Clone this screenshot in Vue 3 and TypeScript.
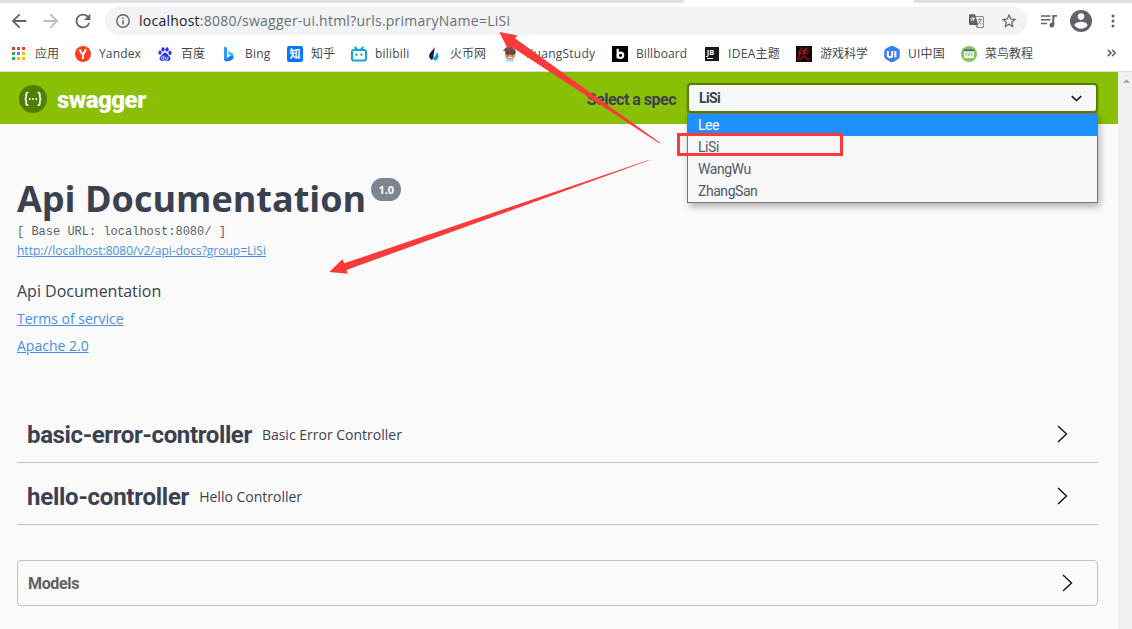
<script setup lang="ts">
interface Bookmark { icon: string; label: string; width: number; spacing: number }

const bookmarks: Bookmark[] = [
  { icon: 'apps', label: '应用', width: 64, spacing: 0 },
  { icon: 'yandex', label: 'Yandex', width: 82, spacing: 0.15 },
  { icon: 'baidu', label: '百度', width: 64, spacing: 0 },
  { icon: 'bing', label: 'Bing', width: 66, spacing: 0.2 },
  { icon: 'zhihu', label: '知乎', width: 64, spacing: 0 },
  { icon: 'bili', label: 'bilibili', width: 75, spacing: 0.2 },
  { icon: 'huobi', label: '火币网', width: 76, spacing: 0 },
  { icon: 'kuang', label: 'KuangStudy', width: 110, spacing: 0.25 },
  { icon: 'billboard', label: 'Billboard', width: 92, spacing: 0.1 },
  { icon: 'jb', label: 'IDEA主题', width: 92, spacing: 0.3 },
  { icon: 'game', label: '游戏科学', width: 88, spacing: 0 },
  { icon: 'ui', label: 'UI中国', width: 77, spacing: 0.2 },
  { icon: 'runoob', label: '菜鸟教程', width: 80, spacing: 0 },
]
const appColors = ['#ea4335', '#ea4335', '#ea4335', '#34a853', '#4285f4', '#fbbc05', '#34a853', '#fbbc05', '#fbbc05']
const specs = ['Lee', 'LiSi', 'WangWu', 'ZhangSan']
const tags = [
  { name: 'basic-error-controller', description: 'Basic Error Controller', spacing: -0.37 },
  { name: 'hello-controller', description: 'Hello Controller', spacing: -0.25 },
]
</script>

<template>
  <div class="window">
    <div class="tabstrip"><div class="tab-left"></div><div class="tab-right"></div></div>
    <div class="toolbar">
      <svg class="nav" viewBox="0 0 24 24"><path d="M20 11H7.83l5.59-5.59L12 4l-8 8 8 8 1.41-1.41L7.83 13H20z" /></svg>
      <svg class="nav off" viewBox="0 0 24 24"><path d="M12 4l-1.41 1.41L16.17 11H4v2h12.17l-5.58 5.59L12 20l8-8z" /></svg>
      <svg class="nav" viewBox="0 0 24 24"><path d="M17.65 6.35A8 8 0 1 0 19.73 14h-2.08A6 6 0 1 1 12 6c1.66 0 3.14.69 4.22 1.78L13 11h7V4z" /></svg>
      <div class="omnibox">
        <svg class="info" viewBox="0 0 14 14"><circle cx="7" cy="7" r="6.2" fill="none" stroke="#5f6368" stroke-width="1.4" /><path d="M6.3 6.2h1.5v4.3H6.3zM6.3 3.4h1.5v1.5H6.3z" /></svg>
        <div class="url"><b>localhost</b>:8080/swagger-ui.html?urls.primaryName=LiSi</div>
        <svg class="translate" viewBox="0 0 15 14">
          <path d="M5 2.7h9.3v10.6H8.3L6.8 11" fill="#fff" stroke="#72767a" />
          <path d="M1 .2h5L9.3 11H1a1 1 0 0 1-1-1V1.200a1 1 0 0 1 1-1z" />
          <path d="M6 4.400H4v1h1C4.600 7.300 2 6.900 2 5.200 2 3.500 4 3.200 4.800 4.100" fill="none" stroke="#fff" stroke-width=".9" />
          <path d="M8.500 5.500h4.500M10.700 4.500v1M12 5.500c-.4 2-1.500 3.500-3 4.500M9.500 7c.8 1.500 2 2.500 3.300 3.300M7.300 13.500l2-2.500" fill="none" stroke="#72767a" stroke-width=".9" />
        </svg>
        <svg class="star" viewBox="0 0 24 24"><path d="M22 9.240l-7.190-.620L12 2 9.190 8.630 2 9.240l5.460 4.730L5.820 21 12 17.270 18.180 21l-1.630-7.030zM12 15.400l-3.760 2.270 1-4.280-3.320-2.880 4.380-.380L12 6.100l1.710 4.040 4.380.380-3.320 2.880 1 4.280z" /></svg>
      </div>
      <svg class="queue" viewBox="0 0 16 13"><path d="M0 .3h9.500v1.500H0zM0 4h9.500v1.500H0zM0 7.800h6v1.500H0zM11.300 0H16v1.800h-2.700v8.200a2.400 2.400 0 1 1-2-2.300z" /></svg>
      <svg class="avatar" viewBox="0 0 22 22"><circle cx="11" cy="11" r="11" /><circle cx="11" cy="6.600" r="3.300" fill="#fff" /><path d="M4.400 15.300c.8-2.700 4.500-3.500 6.600-3.500s5.800.8 6.600 3.500a8 8 0 0 1-13.200 0z" fill="#fff" /></svg>
      <svg class="more" viewBox="0 0 4 14"><circle cx="2" cy="2" r="1.500" /><circle cx="2" cy="7" r="1.500" /><circle cx="2" cy="12" r="1.500" /></svg>
    </div>

    <div class="bookmarks">
      <div v-for="b in bookmarks" :key="b.icon" class="bookmark" :style="{ width: b.width + 'px' }">
        <svg class="fav" viewBox="0 0 16 16">
          <g v-if="b.icon === 'apps'"><rect v-for="(c, i) in appColors" :key="i" :x="1 + (i % 3) * 5" :y="1 + Math.floor(i / 3) * 5" width="3" height="3" :fill="c" /></g>
          <g v-else-if="b.icon === 'yandex'"><circle cx="8" cy="8" r="8" fill="#fc3f1d" /><path d="M4.500 3.500L8 9.200V13M11 3L8 9.200" fill="none" stroke="#fff" stroke-width="1.900" /></g>
          <g v-else-if="b.icon === 'baidu'" fill="#2a32e0"><ellipse cx="3" cy="6.700" rx="1.600" ry="2.100" /><ellipse cx="6" cy="3.400" rx="1.700" ry="2.200" /><ellipse cx="10" cy="3.400" rx="1.700" ry="2.200" /><ellipse cx="13" cy="6.900" rx="1.600" ry="2.100" /><path d="M8 6.500c2 0 2.400 2.300 4.200 3.700 2.300 1.800 1.200 5-1.700 4.500-1.700-.3-3.300-.3-5 0-3 .500-4-2.700-1.700-4.500C5.600 8.800 6 6.500 8 6.500z" /><path d="M6.800 9.500v3.800H5.400a1 1 0 0 1 0-2.300h1.400M8.700 10.700v2.500h2.200v-2.500" fill="none" stroke="#fff" stroke-width=".8" /></g>
          <g v-else-if="b.icon === 'bing'"><path d="M3 .5l3 1.200v10.500l-3 2.600z" fill="#2e9cf0" /><path d="M3 14.800l9.500-3.600v-3.500L6.500 5l1.400 3.400 2 1L6 12.200z" fill="#32bdf2" /><path d="M3 13l1.300 2.300c3 .6 8-.700 8.500-4.500L10 9.400 6 12.200z" fill="#2678e8" /></g>
          <g v-else-if="b.icon === 'zhihu'"><rect width="16" height="16" rx="2" fill="#0877ff" /><text x="8" y="12" text-anchor="middle" font-size="11" font-weight="700" fill="#fff">知</text></g>
          <g v-else-if="b.icon === 'bili'" fill="none" stroke="#14a4dc" stroke-width="2"><rect x="1" y="4" width="14" height="10.600" rx="1.800" /><path d="M3.700 1l2.300 2.500M12.300 1L10 3.500M5.500 7.500v2.200M10.500 7.500v2.200" /></g>
          <g v-else-if="b.icon === 'huobi'"><path d="M8.200 1c1.200 3-1 6-.6 10.500L6 14C2.500 12.500 2.500 8.800 4.700 6.300 6.300 4.500 7.800 3.200 8.200 1z" fill="#171d42" /><path d="M10.500 6c2.500 2 3 6 0 8.300H7.500c-.3-2 .3-3 1.600-4.400C10.200 8.600 10.700 7.700 10.500 6z" fill="#209ed9" /></g>
          <g v-else-if="b.icon === 'kuang'"><path d="M3 5.500h10v5L11 13H5l-2-2.500z" fill="#d89173" /><path d="M.8 4.500L5 .8h5l3.500 3.500v3H3.700V5.200z" fill="#695643" /><path d="M3.500 5.300h10v3h-10z" fill="#773b30" /><path d="M5 8.700h1.800M9.200 8.700H11" stroke="#4e342e" /><path d="M6.300 11h3.500v1H6.300z" fill="#fff" /><path d="M5 13h6l1 2.500H4z" fill="#9ad8e6" /></g>
          <g v-else-if="b.icon === 'billboard'"><rect width="16" height="16" fill="#000" /><path d="M5.700 2.800v9.600" stroke="#fff" stroke-width="2.200" /><circle cx="8.500" cy="9.300" r="2.700" fill="none" stroke="#fff" stroke-width="2.200" /></g>
          <g v-else-if="b.icon === 'jb'"><rect x="1" y="1" width="14" height="14" fill="#171717" /><text x="2.800" y="8.500" font-size="7.500" font-weight="700" fill="#fff">JB</text><path d="M3 12.500h6" stroke="#fff" stroke-width="1" /></g>
          <g v-else-if="b.icon === 'game'"><rect width="16" height="16" fill="#170606" /><path d="M6 1.500L2.500 7l2-.5L2 14M11.500 1.500L6 5.500l7-1.500M9 3L7.500 9M6 8l7-1.500M8 9L4.500 14M8 10.500l5 3.500" fill="none" stroke="#a3181d" stroke-width="1.200" /></g>
          <g v-else-if="b.icon === 'ui'"><path d="M5.800.6a4 4 0 0 1 4.400 0l3.800 2a3.500 3.500 0 0 1 1.800 3v4.700a3.500 3.500 0 0 1-1.800 3l-3.800 2.200a4 4 0 0 1-4.400 0L2 13.300a3.500 3.500 0 0 1-1.800-3V5.600A3.500 3.500 0 0 1 2 2.600z" fill="#3b7cf5" /><path d="M3.800 5v4a2.200 2.200 0 0 0 4.400 0V5M11.400 5v6.500" fill="none" stroke="#fff" stroke-width="2" /></g>
          <g v-else><circle cx="8" cy="8" r="8" fill="#82c553" /><rect x="3" y="3.200" width="10" height="9" rx="1" fill="#edf5e8" /><path d="M3 3.200h10v2H3z" fill="#4b6470" /><path d="M6.400 6.800L4.600 8.300l1.800 1.500M9.600 6.800l1.800 1.500-1.800 1.500M8.500 6.800l-1 3" fill="none" stroke="#657a67" stroke-width=".7" /></g>
        </svg>
        <span :style="{ letterSpacing: b.spacing + 'px' }">{{ b.label }}</span>
      </div>
      <svg class="overflow" viewBox="0 0 8 7"><path d="M.8.7l2.700 2.800L.8 6.300M4.600.7l2.700 2.800-2.700 2.800" fill="none" stroke="#5f6368" stroke-width="1.400" /></svg>
    </div>

    <div class="viewport">
      <main class="page">
        <header class="topbar">
          <svg class="logo" viewBox="0 0 28 28"><circle cx="14" cy="14" r="14" fill="#4f7e04" /><path d="M9.300 7.700H8.600c-1 0-1.400.5-1.400 1.400v2.700c0 1.200-.4 1.900-1.400 2.100 1 .2 1.400.9 1.400 2.100v2.700c0 .9.400 1.400 1.400 1.400h.7M18.700 7.700h.7c1 0 1.400.5 1.400 1.400v2.700c0 1.200.4 1.900 1.400 2.100-1 .2-1.400.9-1.400 2.100v2.700c0 .9-.4 1.400-1.400 1.400h-.7" fill="none" stroke="#fff" stroke-width="1.700" /><g fill="#fff"><circle cx="10.800" cy="14" r="1" /><circle cx="14" cy="14" r="1" /><circle cx="17.200" cy="14" r="1" /></g></svg>
          <span class="brand">swagger</span>
          <span class="select-label">Select a spec</span>
          <div class="select">
            <span>LiSi</span>
            <svg class="caret" viewBox="0 0 10 6"><path d="M.7.8L5 4.800 9.300.8" fill="none" stroke="#111" stroke-width="1.500" /></svg>
            <div class="options"><div v-for="(s, i) in specs" :key="s" class="option" :class="{ active: i === 0 }">{{ s }}</div></div>
            <div class="highlight"></div>
          </div>
        </header>

        <section class="info-block">
          <h1><span>Api Documentation</span><small>1.0</small></h1>
          <pre>[ Base URL: localhost:8080/ ]</pre>
          <a class="docs">http://localhost:8080/v2/api-docs?group=LiSi</a>
          <p>Api Documentation</p>
          <a class="terms">Terms of service</a>
          <a class="license">Apache 2.0</a>
        </section>

        <section class="tags">
          <div v-for="t in tags" :key="t.name" class="tag">
            <h3 :style="{ letterSpacing: t.spacing + 'px' }">{{ t.name }}</h3><span>{{ t.description }}</span>
            <svg class="chevron" viewBox="0 0 11 18"><path d="M1 1l8.500 8L1 17" fill="none" stroke="#111" stroke-width="1.400" /></svg>
          </div>
        </section>
        <section class="models">
          <h4>Models</h4>
          <svg class="chevron" viewBox="0 0 11 18"><path d="M1 1l8.500 8L1 17" fill="none" stroke="#111" stroke-width="1.400" /></svg>
        </section>
      </main>
      <aside class="scrollbar"><svg viewBox="0 0 8 4"><path d="M4 0l4 4H0z" fill="#a3a3a3" /></svg></aside>
    </div>

    <svg class="arrows" viewBox="0 0 1132 629">
      <path d="M499.300 32L517 35.300l-1.700 3.200L660 142.800l-.5.700L511 46.500l-3 2.700z" />
      <path d="M329.300 272l13-12.700 2 4L648.500 160l.2.500L346.300 270l1.500 3.700z" />
    </svg>
  </div>
</template>

<style>
html, body { margin: 0; overflow: hidden; }
</style>

<style scoped>
* { box-sizing: border-box; }
.window { position: relative; width: 1132px; height: 629px; overflow: hidden; background: #fff; font-family: "Open Sans", "Noto Sans CJK SC", sans-serif; color: #3b4151; display: flex; flex-direction: column; }
svg { display: block; flex: none; }
.tabstrip { height: 3px; flex: none; display: flex; justify-content: space-between; }
.tab-left { width: 684px; background: #dee1e6; border-bottom-right-radius: 6px; }
.tab-right { width: 219px; background: #dee1e6; border-bottom-left-radius: 6px; }
.toolbar { height: 36px; flex: none; display: flex; align-items: center; padding-left: 8px; fill: #5f6368; }
.nav { width: 22px; height: 22px; margin-right: 10px; }
.nav.off { fill: #babcbe; }
.omnibox { width: 922px; height: 28px; margin-left: 1px; border-radius: 14px; background: #f1f3f4; display: flex; align-items: center; padding: 0 9px 0 11px; }
.info { width: 14px; height: 14px; }
.url { flex: 1; margin-left: 9px; font-size: 14px; line-height: 20px; letter-spacing: .24px; color: #6b6f73; white-space: nowrap; }
.url b { font-weight: 400; color: #202124; }
.translate { width: 15px; height: 14px; margin-right: 16px; }
.star { width: 18px; height: 18px; }
.queue { width: 16px; height: 13px; margin-left: 14px; }
.avatar { width: 22px; height: 22px; margin-left: 13px; }
.more { width: 4px; height: 14px; margin-left: 19px; }
.bookmarks { height: 33px; flex: none; display: flex; align-items: center; padding: 0 0 4px 11px; border-bottom: 1px solid #d8dadd; }
.bookmark { display: flex; align-items: center; gap: 8px; flex: none; font-size: 12px; line-height: 18px; color: #45494d; white-space: nowrap; padding-top: 1px; }
.bookmark span { padding-top: 1px; }
.fav { width: 16px; height: 16px; }
.overflow { width: 9px; height: 8px; margin-left: 66px; }
.viewport { flex: 1; display: flex; min-height: 0; }
.page { width: 1118px; background: #fafafa; }
.scrollbar { width: 14px; background: #f0f0f0; padding: 7px 0 0 5px; }
.scrollbar svg { width: 7px; height: 4px; }
.topbar { height: 52px; background: #89bf04; display: flex; align-items: center; padding: 0 20px 0 19px; font-family: Roboto, sans-serif; }
.logo { width: 28px; height: 28px; margin-top: 2px; }
.brand { margin-left: 10px; padding-top: 3px; font-size: 24px; font-weight: 900; letter-spacing: -.5px; color: #fff; }
.select-label { margin-left: auto; margin-right: 11px; margin-top: 2px; font-size: 16px; font-weight: 700; letter-spacing: -.5px; white-space: nowrap; }
.select { position: relative; width: 411px; height: 30px; border: 2px solid #547f00; border-radius: 4px; background: #f7f7f7; display: flex; align-items: center; justify-content: space-between; padding: 0 14px 0 10px; font-size: 14px; font-weight: 700; letter-spacing: -.6px; box-shadow: 0 1px 2px rgba(0,0,0,.25); }
.caret { width: 11px; height: 7px; }
.options { position: absolute; left: -2px; top: 28px; width: 411px; height: 90px; border: 1px solid #767676; background: #f7f7f7; box-shadow: 2px 4px 7px rgba(0,0,0,.28); font-weight: 400; letter-spacing: -.45px; }
.option { height: 22px; line-height: 23px; padding-left: 10px; color: #53586a; }
.option.active { background: #1e90ff; color: #fff; }
.highlight { position: absolute; left: -12px; top: 48px; width: 166px; height: 23px; border: 3px solid #fc3a3a; }
.info-block { padding: 50px 17px 0; height: 277px; display: flex; flex-direction: column; align-items: flex-start; }
h1 { margin: 0; height: 49px; display: flex; align-items: flex-start; font-size: 36px; line-height: 49px; font-weight: 700; }
h1 small { margin: 4px 0 0 5px; width: 30px; height: 23px; border-radius: 11.5px; background: #7d8492; color: #fff; font-size: 11px; line-height: 24px; text-align: center; }
pre { margin: 1px 0 0; height: 17px; font: 12px/17px "Liberation Mono", monospace; color: #5a5f6d; }
a { color: #4990e2; text-decoration: underline; }
.docs { font-size: 12px; line-height: 20px; }
p { margin: 18px 0 0; font-size: 16px; line-height: 24px; }
.terms { margin-top: 6px; font-size: 14px; line-height: 19px; }
.license { margin-top: 8px; font-size: 14px; line-height: 19px; }
.tags { margin: 0 20px 0 17px; }
.tag { height: 62px; display: flex; align-items: center; padding: 4px 30px 0 10px; border-bottom: 1px solid #bfc0c3; }
h3 { margin: 2px 10px 0 0; font: 700 24px/30px Roboto, sans-serif; }
.tag span { flex: 1; padding-top: 2px; font-size: 14px; }
.chevron { width: 11px; height: 18px; }
.models { margin: 35px 20px 0 17px; height: 46px; border: 1px solid #bfc0c3; border-radius: 4px; display: flex; align-items: center; justify-content: space-between; padding: 0 24px 0 10px; }
h4 { margin: 2px 0 0; font: 700 16px/20px Roboto, sans-serif; letter-spacing: -.35px; color: #606060; }
.arrows { position: absolute; inset: 0; width: 1132px; height: 629px; fill: #fc3a3a; pointer-events: none; }
</style>
